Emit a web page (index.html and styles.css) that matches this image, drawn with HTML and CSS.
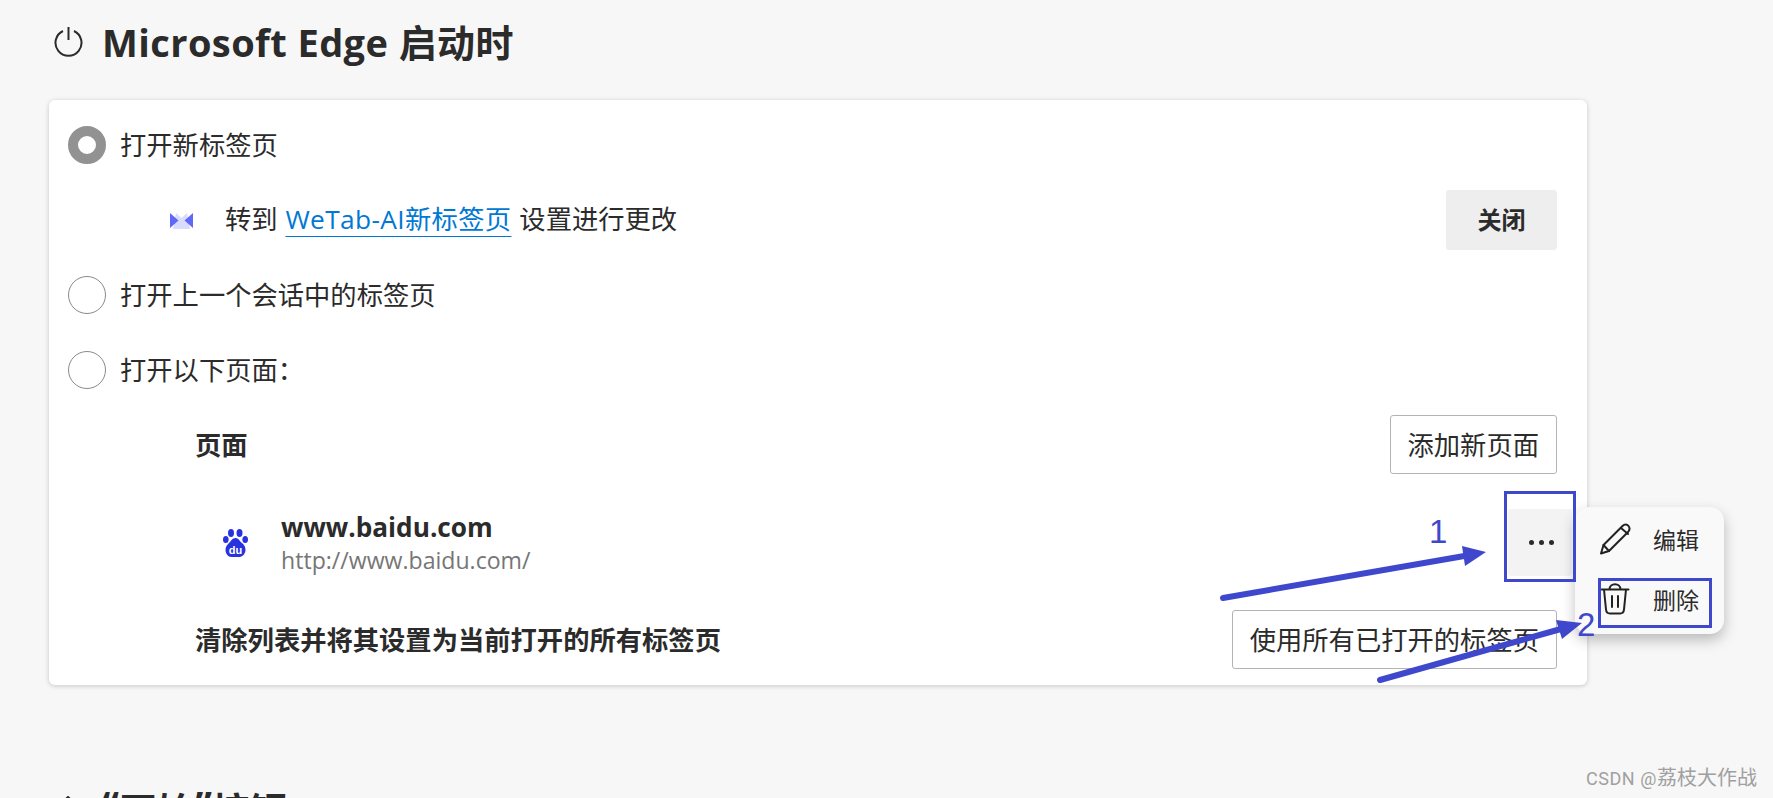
FILE: index.html
```html
<!DOCTYPE html>
<html lang="zh-CN">
<head>
<meta charset="utf-8">
<title>Microsoft Edge 启动时</title>
<link rel="stylesheet" href="styles.css">
</head>
<body>
<main class="page">
  <header class="section-head">
    <svg class="power-icon" viewBox="0 0 30 30" aria-hidden="true"><path d="M9 4A13 13 0 1 0 20 4"/><path d="M14.500 0v13"/></svg>
    <h1 class="section-title">Microsoft Edge 启动时</h1>
  </header>
  <section class="card">
    <div class="radio-row"><span class="radio radio-on"></span><span>打开新标签页</span></div>
    <div class="ext-row">
      <svg class="wetab-icon" viewBox="0 0 23 20" aria-hidden="true"><path class="wetab-light" d="M3 19 6 3 11.500 8 17 3 20 19Z"/><path class="wetab-dark" d="M0 3 8.500 10.500 0 18ZM23 3 14.500 10.500 23 18Z"/></svg>
      <span class="ext-text">转到 <a class="ext-link" href="#">WeTab-AI新标签页</a> 设置进行更改</span>
      <button class="btn btn-solid">关闭</button>
    </div>
    <div class="radio-row"><span class="radio"></span><span>打开上一个会话中的标签页</span></div>
    <div class="radio-row"><span class="radio"></span><span>打开以下页面：</span></div>
    <div class="pages-head"><span class="bold">页面</span><button class="btn">添加新页面</button></div>
    <div class="page-row">
      <svg class="baidu-icon" viewBox="0 0 25 28" aria-hidden="true"><ellipse cx="8" cy="4" rx="3" ry="4"/><ellipse cx="16.500" cy="4" rx="3" ry="4"/><ellipse cx="2.800" cy="10.500" rx="2.800" ry="3.500"/><ellipse cx="22.200" cy="10.500" rx="2.800" ry="3.500"/><path d="M12.500 9c3 0 4 3 6.500 5s3.500 4 3.500 7-2.500 7-6 7h-8c-3.500 0-6-3.500-6-7s1.500-5 3.500-7 3.500-5 6.500-5z"/><text class="baidu-du" x="12.500" y="25" text-anchor="middle">du</text></svg>
      <div class="page-info">
        <div class="page-name">www.baidu.com</div>
        <div class="page-url">http://www.baidu.com/</div>
      </div>
      <button class="more-btn" aria-label="更多"><span></span><span></span><span></span></button>
    </div>
    <div class="clear-row"><span class="bold">清除列表并将其设置为当前打开的所有标签页</span><button class="btn">使用所有已打开的标签页</button></div>
  </section>
  <header class="section-head next-head">
    <svg class="home-icon" viewBox="0 0 30 30" aria-hidden="true"><path d="M1 14 15 1l14 13M5 11v17h20V11"/></svg>
    <h2 class="section-title next-title"><span class="quote">“</span>开始<span class="quote">”</span>按钮</h2>
  </header>
</main>

<div class="menu">
  <div class="menu-item">
    <svg class="menu-icon" viewBox="0 0 32 32" aria-hidden="true"><path d="M2 30.500 4.500 22 23.500 3c2-2 4.500-2 6 0s1.500 4-.500 6L10 28Z"/><path d="M4.500 22 10 28M22 5l7 6"/></svg>
    <span>编辑</span>
  </div>
  <div class="menu-item">
    <svg class="menu-icon" viewBox="0 0 32 32" aria-hidden="true"><path d="M2.500 6.500h27M10.500 6.500c0-7 11-7 11 0M5 6.500l2 20c.2 2.500 1.500 4 4 4h10c2.500 0 3.800-1.500 4-4l2-20M13 13v11M19 13v11"/></svg>
    <span>删除</span>
  </div>
</div>

<div class="mark mark-more"></div>
<div class="mark mark-delete"></div>
<svg class="arrows" viewBox="0 0 1773 798" aria-hidden="true">
  <path class="arrow-line" d="M1223 598 1470 555"/>
  <path class="arrow-head" d="M1486 552 1462 546 1465 566Z"/>
  <path class="arrow-line" d="M1380 680 1568 627"/>
  <path class="arrow-head" d="M1582 623 1556 620 1562 639Z"/>
</svg>
<span class="step step-1">1</span>
<span class="step step-2">2</span>
<div class="watermark"><span class="watermark-latin">CSDN @</span>荔枝大作战</div>
</body>
</html>
```
FILE: styles.css
```css
* { box-sizing: border-box; }
html, body { margin: 0; height: 798px; overflow: hidden; }
body {
  position: relative;
  background: #f7f7f7;
  color: #2b2b2b;
  font-family: "Open Sans", "Noto Sans CJK SC", sans-serif;
  font-size: 26.300px;
}
.page { padding: 0 186px 0 49px; }
.section-head { display: flex; align-items: center; gap: 18px; height: 90px; padding: 0 0 6px 5px; }
.power-icon { width: 30px; height: 30px; fill: none; stroke: #2b2b2b; stroke-width: 2; flex: none; }
.section-title { margin: 0; font-size: 38px; letter-spacing: .42px; font-weight: 700; line-height: 50px; }
.card {
  height: 585px;
  margin-top: 10px;
  padding: 7px 30px 0 19px;
  background: #fff;
  border-radius: 6px;
  box-shadow: 0 1px 5px rgba(0, 0, 0, .2);
  line-height: 36px;
}
.radio-row { display: flex; align-items: center; gap: 14px; height: 75px; }
.radio { width: 38px; height: 38px; border: 1px solid #8a8a8a; border-radius: 50%; flex: none; background: #fff; }
.radio-on { border: 10px solid #929292; }
.ext-row { display: flex; align-items: center; height: 60px; padding-left: 102px; margin: 8px 0 7px; }
.wetab-icon { width: 23px; height: 20px; flex: none; margin-right: 32px; }
.wetab-light { fill: #d9dcff; }
.wetab-dark { fill: #6168f5; }
.ext-text { flex: 1; word-spacing: 1px; margin-top: -2px; }
.ext-link { color: #0078d4; letter-spacing: .35px; text-decoration: underline 1px; text-decoration-skip-ink: none; text-underline-offset: 7px; }
.btn {
  height: 59px;
  padding: 0 17px;
  background: #fff;
  border: 1px solid #b4b4b4;
  border-radius: 3px;
  color: #2b2b2b;
  font: inherit;
  white-space: nowrap;
}
.btn-solid { width: 111px; height: 60px; background: #eeeeee; border: 0; font-size: 24px; font-weight: 700; }
.bold { font-weight: 700; }
.pages-head { display: flex; align-items: center; justify-content: space-between; height: 59px; margin-top: 8px; padding-left: 127px; }
.page-row { display: flex; align-items: center; height: 67px; margin-top: 35px; padding-left: 155px; }
.baidu-icon { width: 25px; height: 28px; fill: #2932e1; flex: none; margin-right: 33px; }
.baidu-du { fill: #fff; font-size: 11px; font-weight: 700; font-family: "Liberation Sans", sans-serif; }
.page-info { flex: 1; }
.page-name { font-weight: 700; font-size: 26.200px; line-height: 34px; }
.page-url { color: #767676; font-size: 23.100px; line-height: 32px; }
.more-btn { display: flex; align-items: center; justify-content: center; gap: 5px; width: 64px; height: 67px; margin-right: -15px; padding: 0 0 0 3px; border: 0; background: #f3f3f3; border-radius: 3px; }
.more-btn span { width: 5px; height: 5px; border-radius: 50%; background: #2b2b2b; }
.clear-row { display: flex; align-items: center; justify-content: space-between; height: 59px; margin-top: 34px; padding-left: 127px; }
.next-head { margin-top: 100px; height: 60px; padding: 0 0 0 4px; gap: 19px; align-items: flex-start; }
.next-title { letter-spacing: 0; }
.quote { vertical-align: 6px; line-height: 1; }
.home-icon { width: 30px; height: 30px; margin-top: 11px; fill: none; stroke: #2b2b2b; stroke-width: 2; flex: none; }
.menu {
  position: absolute;
  left: 1575px;
  top: 507px;
  width: 149px;
  height: 127px;
  padding: 2px 0 0 24px;
  background: #f9f9f9;
  border-radius: 14px;
  box-shadow: 0 6px 14px rgba(0, 0, 0, .25);
  font-size: 23px;
}
.menu-item { display: flex; align-items: center; gap: 22px; height: 60px; }
.menu-icon { width: 32px; height: 32px; fill: none; stroke: #222; stroke-width: 2; stroke-linejoin: round; stroke-linecap: round; flex: none; }
.mark { position: absolute; border: 3px solid #3f48cc; }
.mark-more { left: 1504px; top: 491px; width: 72px; height: 91px; }
.mark-delete { left: 1598px; top: 578px; width: 114px; height: 50px; }
.arrows { position: absolute; inset: 0; width: 1773px; height: 798px; pointer-events: none; }
.arrow-line { fill: none; stroke: #3f48cc; stroke-width: 6; stroke-linecap: round; }
.arrow-head { fill: #3f48cc; }
.step { position: absolute; color: #3f48cc; font-family: "Liberation Sans", sans-serif; font-size: 33px; line-height: 38px; }
.step-1 { left: 1429px; top: 513px; }
.step-2 { left: 1577px; top: 606px; }
.watermark { position: absolute; left: 1586px; top: 764px; color: #a0a0a0; font-size: 20px; line-height: 28px; font-family: "Roboto", "Noto Sans CJK SC", sans-serif; }
.watermark-latin { font-size: 18px; letter-spacing: .55px; }
```
